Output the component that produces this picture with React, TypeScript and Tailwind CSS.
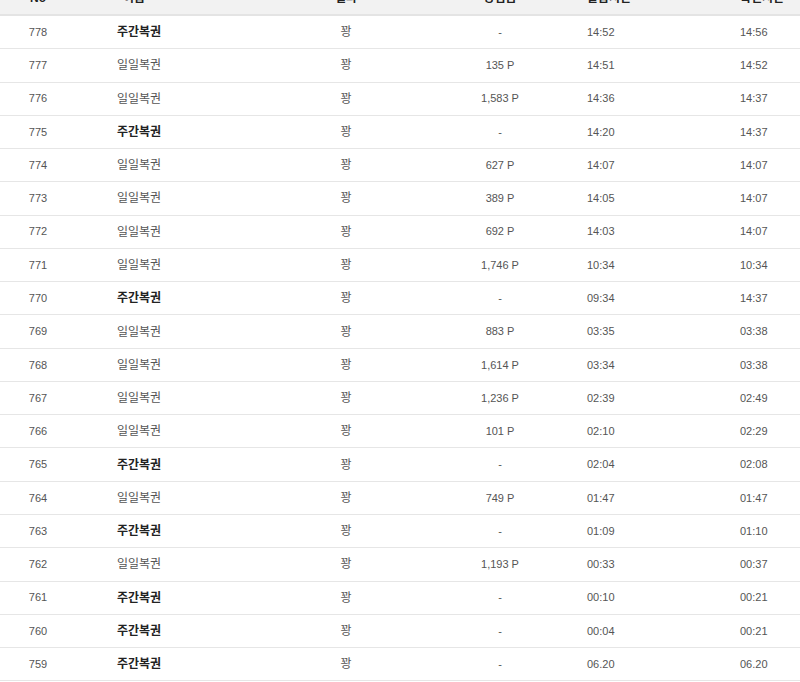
type Row = {
  no: number;
  weekly: boolean;
  prize: string;
  issued: string;
  checked: string;
};

const rows: Row[] = [
  { no: 778, weekly: true, prize: "-", issued: "14:52", checked: "14:56" },
  { no: 777, weekly: false, prize: "135 P", issued: "14:51", checked: "14:52" },
  { no: 776, weekly: false, prize: "1,583 P", issued: "14:36", checked: "14:37" },
  { no: 775, weekly: true, prize: "-", issued: "14:20", checked: "14:37" },
  { no: 774, weekly: false, prize: "627 P", issued: "14:07", checked: "14:07" },
  { no: 773, weekly: false, prize: "389 P", issued: "14:05", checked: "14:07" },
  { no: 772, weekly: false, prize: "692 P", issued: "14:03", checked: "14:07" },
  { no: 771, weekly: false, prize: "1,746 P", issued: "10:34", checked: "10:34" },
  { no: 770, weekly: true, prize: "-", issued: "09:34", checked: "14:37" },
  { no: 769, weekly: false, prize: "883 P", issued: "03:35", checked: "03:38" },
  { no: 768, weekly: false, prize: "1,614 P", issued: "03:34", checked: "03:38" },
  { no: 767, weekly: false, prize: "1,236 P", issued: "02:39", checked: "02:49" },
  { no: 766, weekly: false, prize: "101 P", issued: "02:10", checked: "02:29" },
  { no: 765, weekly: true, prize: "-", issued: "02:04", checked: "02:08" },
  { no: 764, weekly: false, prize: "749 P", issued: "01:47", checked: "01:47" },
  { no: 763, weekly: true, prize: "-", issued: "01:09", checked: "01:10" },
  { no: 762, weekly: false, prize: "1,193 P", issued: "00:33", checked: "00:37" },
  { no: 761, weekly: true, prize: "-", issued: "00:10", checked: "00:21" },
  { no: 760, weekly: true, prize: "-", issued: "00:04", checked: "00:21" },
  { no: 759, weekly: true, prize: "-", issued: "06.20", checked: "06.20" },
];

const cols = "grid grid-cols-[76px_203px_134px_174px_153px_1fr] items-center";

export default function App() {
  return (
    <div className="h-[682px] w-[800px] overflow-hidden bg-white font-['Liberation_Sans','Noto_Sans_CJK_KR',sans-serif] text-[11px] text-[#555]">
      {/* header is scrolled off the top; only its bottom shows */}
      <div className={`${cols} -mt-[18px] h-[34px] border-b-2 border-[#e4e4e4] bg-[#f2f2f2] text-[12px] font-bold text-[#222]`}>
        <div className="text-center">No</div>
        <div className="pl-[47px]">이름</div>
        <div className="text-center">결과</div>
        <div className="text-center">당첨금</div>
        <div>발급시간</div>
        <div>확인시간</div>
      </div>

      {rows.map((r) => (
        <div key={r.no} className={`${cols} h-[33.28px] border-b border-[#e6e6e6]`}>
          <div className="text-center">{r.no}</div>
          <div className="pl-[41px] text-[12px]">
            {r.weekly ? (
              <span className="font-bold text-[#222]">주간복권</span>
            ) : (
              <span>일일복권</span>
            )}
          </div>
          <div className="text-center text-[12px]">꽝</div>
          <div className="text-center">{r.prize}</div>
          <div>{r.issued}</div>
          <div>{r.checked}</div>
        </div>
      ))}
    </div>
  );
}
